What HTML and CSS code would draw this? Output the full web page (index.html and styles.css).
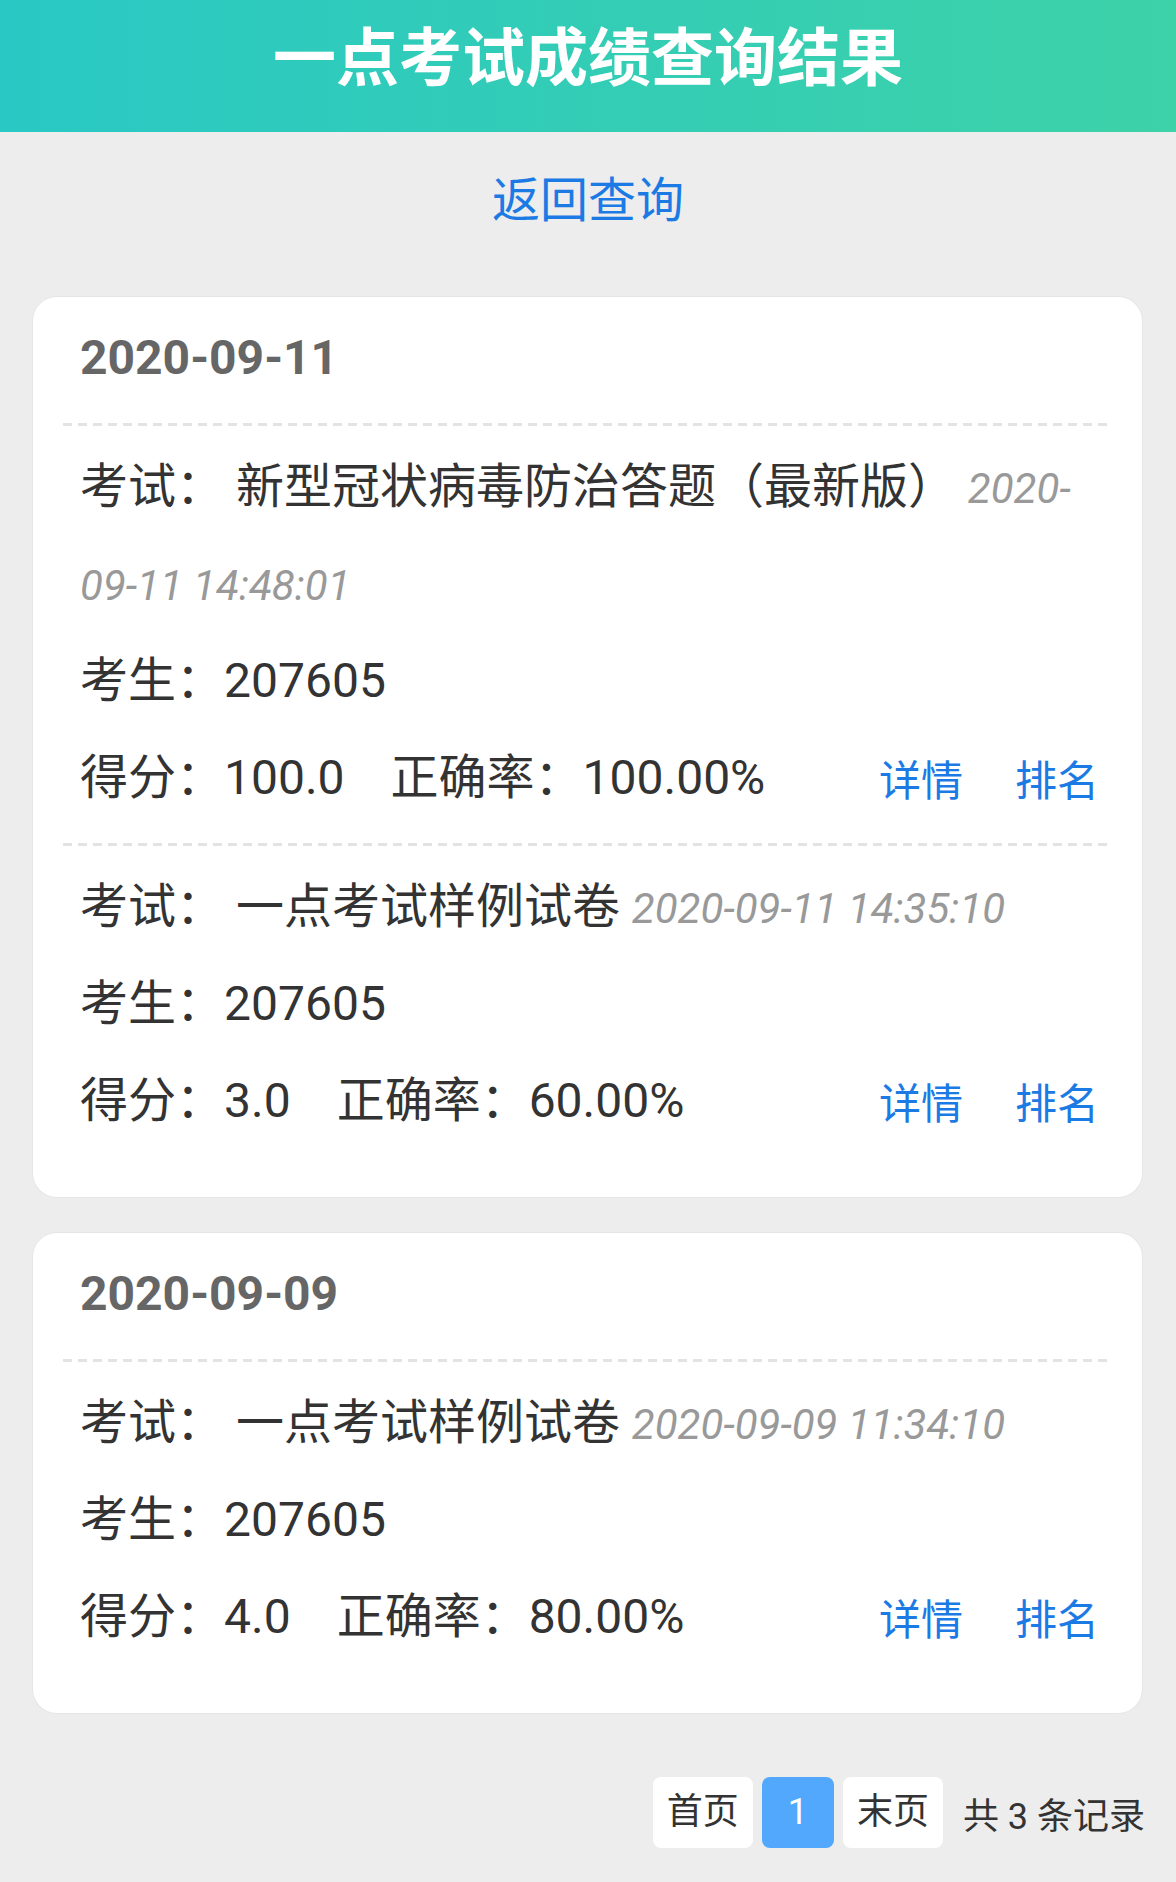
FILE: index.html
```html
<!DOCTYPE html>
<html lang="zh-CN">
<head>
<meta charset="utf-8">
<title>一点考试成绩查询结果</title>
<link rel="stylesheet" href="styles.css">
</head>
<body>
<header class="topbar">
  <h1 class="title">一点考试成绩查询结果</h1>
</header>
<div class="back"><a class="back-link" href="#">返回查询</a></div>
<main class="list">
  <section class="day-card">
    <div class="day-head">2020-09-11</div>
    <div class="record">
      <p class="row">考试： 新型冠状病毒防治答题（最新版） <span class="time">2020-<wbr>09-11 14:48:01</span></p>
      <p class="row">考生：207605</p>
      <div class="row score-row">
        <span>得分：100.0</span><span class="rate">正确率：100.00%</span>
        <span class="actions"><a href="#">详情</a><a href="#">排名</a></span>
      </div>
    </div>
    <div class="record">
      <p class="row">考试： 一点考试样例试卷 <span class="time">2020-09-11 14:35:10</span></p>
      <p class="row">考生：207605</p>
      <div class="row score-row">
        <span>得分：3.0</span><span class="rate">正确率：60.00%</span>
        <span class="actions"><a href="#">详情</a><a href="#">排名</a></span>
      </div>
    </div>
  </section>
  <section class="day-card">
    <div class="day-head">2020-09-09</div>
    <div class="record">
      <p class="row">考试： 一点考试样例试卷 <span class="time">2020-09-09 11:34:10</span></p>
      <p class="row">考生：207605</p>
      <div class="row score-row">
        <span>得分：4.0</span><span class="rate">正确率：80.00%</span>
        <span class="actions"><a href="#">详情</a><a href="#">排名</a></span>
      </div>
    </div>
  </section>
</main>
<nav class="pager">
  <a class="page-btn" href="#">首页</a>
  <a class="page-btn active" href="#">1</a>
  <a class="page-btn" href="#">末页</a>
  <span class="total">共 3 条记录</span>
</nav>
</body>
</html>
```
FILE: styles.css
```css
html, body {
  margin: 0;
  padding: 0;
}
body {
  background: #ededed;
  color: #333;
  font-family: Roboto, "Noto Sans CJK SC", sans-serif;
}
a {
  text-decoration: none;
}
.topbar {
  height: 132px;
  background: linear-gradient(90deg, #29c8c4 0%, #3dd2a8 100%);
  text-align: center;
}
.title {
  margin: 0;
  font-family: "Noto Sans CJK SC", sans-serif;
  font-size: 63px;
  font-weight: 700;
  line-height: 106px;
  color: #fff;
}
.back {
  padding: 19px 0 46px;
  font-size: 48px;
  line-height: 100px;
  text-align: center;
}
.back-link {
  color: #1c7ae4;
}
.list {
  padding: 0 34px 0 33px;
}
.day-card {
  background: #fff;
  border-radius: 24px;
  box-shadow: 0 0 0 1px #e6e6e6;
  padding: 0 30px 28px;
  margin-bottom: 36px;
}
.day-card:last-child {
  margin-bottom: 0;
}
.day-head {
  padding: 0 17px 7px;
  height: 122px;
  line-height: 122px;
  font-size: 48px;
  font-weight: 700;
  color: #666;
  background: repeating-linear-gradient(90deg, #e3e3e3 0 9px, transparent 9px 15px) left bottom / 100% 3px no-repeat;
}
.record {
  padding: 12px 13px 20px 17px;
}
.record:not(:last-child) {
  background: repeating-linear-gradient(90deg, #e3e3e3 0 9px, transparent 9px 15px) left bottom / 100% 3px no-repeat;
}
.row {
  margin: 0;
  font-size: 48px;
  line-height: 97px;
}
.time {
  font-size: 42px;
  line-height: 1;
  font-style: italic;
  color: #999;
}
.score-row {
  display: flex;
  align-items: center;
}
.rate {
  margin-left: 46px;
}
.actions {
  margin-left: auto;
  font-size: 42px;
  position: relative;
  top: 4px;
}
.actions a {
  color: #1c7ae4;
}
.actions a + a {
  margin-left: 52px;
}
.pager {
  display: flex;
  justify-content: flex-end;
  align-items: center;
  gap: 9px;
  margin: 64px 31px 0 0;
  padding-bottom: 35px;
}
.page-btn {
  height: 71px;
  line-height: 71px;
  padding: 0 14px;
  background: #fff;
  border-radius: 8px;
  font-size: 36px;
  color: #333;
}
.page-btn.active {
  background: #51a8fc;
  color: #fff;
  padding: 0 26px;
}
.total {
  margin-left: 11px;
  font-size: 36px;
  color: #333;
}
```
